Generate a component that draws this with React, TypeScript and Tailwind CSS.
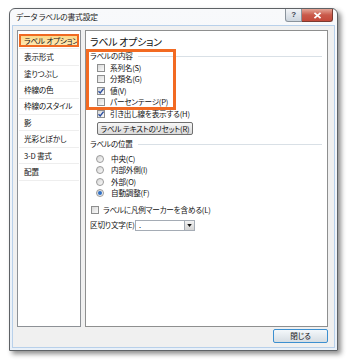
import React from "react";

const Check = ({ checked, className = "" }: { checked?: boolean; className?: string }) => (
  <div
    className={`relative w-[8px] h-[8px] shrink-0 border border-[#8e8f8f] bg-gradient-to-br from-[#d8d8d8] to-[#fbfbfb] ${className}`}
  >
    {checked && (
      <svg viewBox="0 0 8 8" className="absolute left-[-1px] top-[-1px] w-[8px] h-[8px]">
        <path d="M1.5 4.2 L3.2 6 L6.6 1.6" fill="none" stroke="#2b4ea0" strokeWidth="1.4" />
      </svg>
    )}
  </div>
);

const Radio = ({ on }: { on?: boolean }) => (
  <div className="w-[8px] h-[8px] shrink-0 rounded-full border border-[#9a9a9a] bg-gradient-to-br from-[#d6d6d6] to-[#fafafa] flex items-center justify-center">
    {on && <div className="w-[4px] h-[4px] rounded-full bg-[#2f6fc4]" />}
  </div>
);

const GroupLabel = ({ text, h }: { text: string; h: string }) => (
  <div className={`flex items-center ${h} pr-[5px]`}>
    <span>{text}</span>
    <div className="flex-1 h-px bg-[#d9e0e6] ml-[5px]" />
  </div>
);

const listItems = [
  "表示形式",
  "塗りつぶし",
  "枠線の色",
  "枠線のスタイル",
  "影",
  "光彩とぼかし",
  "3-D 書式",
  "配置",
];

export default function App() {
  return (
    <div className="w-[350px] h-[364px] bg-white pl-[9px] pt-[8px] font-['Noto_Sans_CJK_JP','Liberation_Sans',sans-serif] [font-feature-settings:'palt'] text-[7.6px] tracking-[-0.2px] leading-none text-[#111] whitespace-nowrap">
      <div className="w-[329px] h-[343px] rounded-t-[6px] border border-[#5e6266] bg-gradient-to-b from-[#f8f9fb] to-[#e9f0f8] shadow-[3px_3px_5px_rgba(0,0,0,0.45)] flex flex-col px-[2px] pb-[2px]">
        {/* title bar */}
        <div className="h-[16px] flex items-start shrink-0">
          <div className="flex-1 h-full flex items-center pl-[4px] text-[7.8px] text-[#1a1a1a]">
            データ ラベルの書式設定
          </div>
          <div className="flex mr-[2px]">
            <div className="w-[17px] h-[13px] rounded-bl-[3px] border border-[#8a939c] border-t-0 bg-gradient-to-b from-[#f2f4f7] to-[#cdd5de] flex items-center justify-center text-[8px] font-bold text-[#3a4450] font-['Liberation_Sans',sans-serif]">
              ?
            </div>
            <div className="w-[31px] h-[13px] rounded-br-[3px] border border-[#7a3a30] border-t-0 border-l-0 bg-gradient-to-b from-[#e3a597] via-[#c9594a] to-[#c4493a] flex items-center justify-center">
              <svg viewBox="0 0 10 8" className="w-[9px] h-[7px]">
                <path d="M1.5 1 L8.5 7 M8.5 1 L1.5 7" stroke="#fff" strokeWidth="2" />
              </svg>
            </div>
          </div>
        </div>
        {/* client */}
        <div className="flex-1 border border-[#b8d0ea] bg-[#f0f0f0] flex flex-col pt-[4px] pl-[4px] pr-[6px] pb-[4px]">
          <div className="flex-1 flex gap-[4px]">
            {/* left list */}
            <div className="w-[64px] shrink-0 border border-[#8d9196] bg-white pt-[2px] px-[1px]">
              <div className="h-[16.4px] flex items-center border-b border-[#eeeeee]">
                <div className="w-full h-[13px] border-[2px] border-[#f06a22] bg-gradient-to-b from-[#fbd98a] to-[#fde8b4] flex items-center pl-[3px] overflow-hidden">
                  ラベル オプション
                </div>
              </div>
              {listItems.map((t) => (
                <div
                  key={t}
                  className="h-[16.4px] flex items-center pl-[5px] border-b border-[#eeeeee] overflow-hidden"
                >
                  {t}
                </div>
              ))}
            </div>
            {/* right panel */}
            <div className="relative flex-1 border border-[#8e8f8f] bg-white pt-[3px] pl-[4px] flex flex-col">
              <div className="h-[16px] flex items-center text-[10px] tracking-[-0.3px] text-[#111]">ラベル オプション</div>
              <GroupLabel text="ラベルの内容" h="h-[12px]" />
              {[
                ["系列名(S)", false],
                ["分類名(G)", false],
                ["値(V)", true],
                ["パーセンテージ(P)", false],
                ["引き出し線を表示する(H)", true],
              ].map(([t, c]) => (
                <div key={t as string} className="h-[11.5px] flex items-center pl-[7px] gap-[5px]">
                  <Check checked={c as boolean} />
                  <span>{t as string}</span>
                </div>
              ))}
              <div className="mt-[2.5px] ml-[7px] w-[96px] h-[13px] rounded-[2px] border border-[#707070] bg-gradient-to-b from-[#f6f6f6] to-[#dadada] flex items-center justify-center">
                ラベル テキストのリセット(R)
              </div>
              <GroupLabel text="ラベルの位置" h="h-[18px]" />
              {[
                ["中央(C)", false],
                ["内部外側(I)", false],
                ["外部(O)", false],
                ["自動調整(F)", true],
              ].map(([t, on]) => (
                <div key={t as string} className="h-[11.5px] flex items-center pl-[6px] gap-[7px]">
                  <Radio on={on as boolean} />
                  <span>{t as string}</span>
                </div>
              ))}
              <div className="mt-[5px] h-[12px] flex items-center pl-[1px] gap-[4px]">
                <Check />
                <span>ラベルに凡例マーカーを含める(L)</span>
              </div>
              <div className="mt-[3px] h-[12px] flex items-center">
                <span className="w-[45px] shrink-0">区切り文字(E)</span>
                <div className="w-[60px] h-[11px] border border-[#a5acb5] bg-white flex">
                  <div className="flex-1 pl-[3px] flex items-end pb-[1px]">.</div>
                  <div className="w-[10px] h-full bg-gradient-to-b from-[#f2f2f2] to-[#d4d4d4] border-l border-[#a5acb5] flex items-center justify-center">
                    <svg viewBox="0 0 6 4" className="w-[5px] h-[3px]">
                      <path d="M0 0 L6 0 L3 4 Z" fill="#111" />
                    </svg>
                  </div>
                </div>
              </div>
              {/* annotation box */}
              <div className="absolute left-0 top-[18px] w-[90px] h-[61px] border-[3px] border-[#f26a22] pointer-events-none" />
            </div>
          </div>
          <div className="mt-[2px] h-[14px] flex justify-end">
            <div className="w-[55px] h-[14px] rounded-[2px] border border-[#3c8fd0] bg-gradient-to-b from-[#f4f8fb] to-[#d6dde3] flex items-center justify-center">
              閉じる
            </div>
          </div>
        </div>
      </div>
    </div>
  );
}
